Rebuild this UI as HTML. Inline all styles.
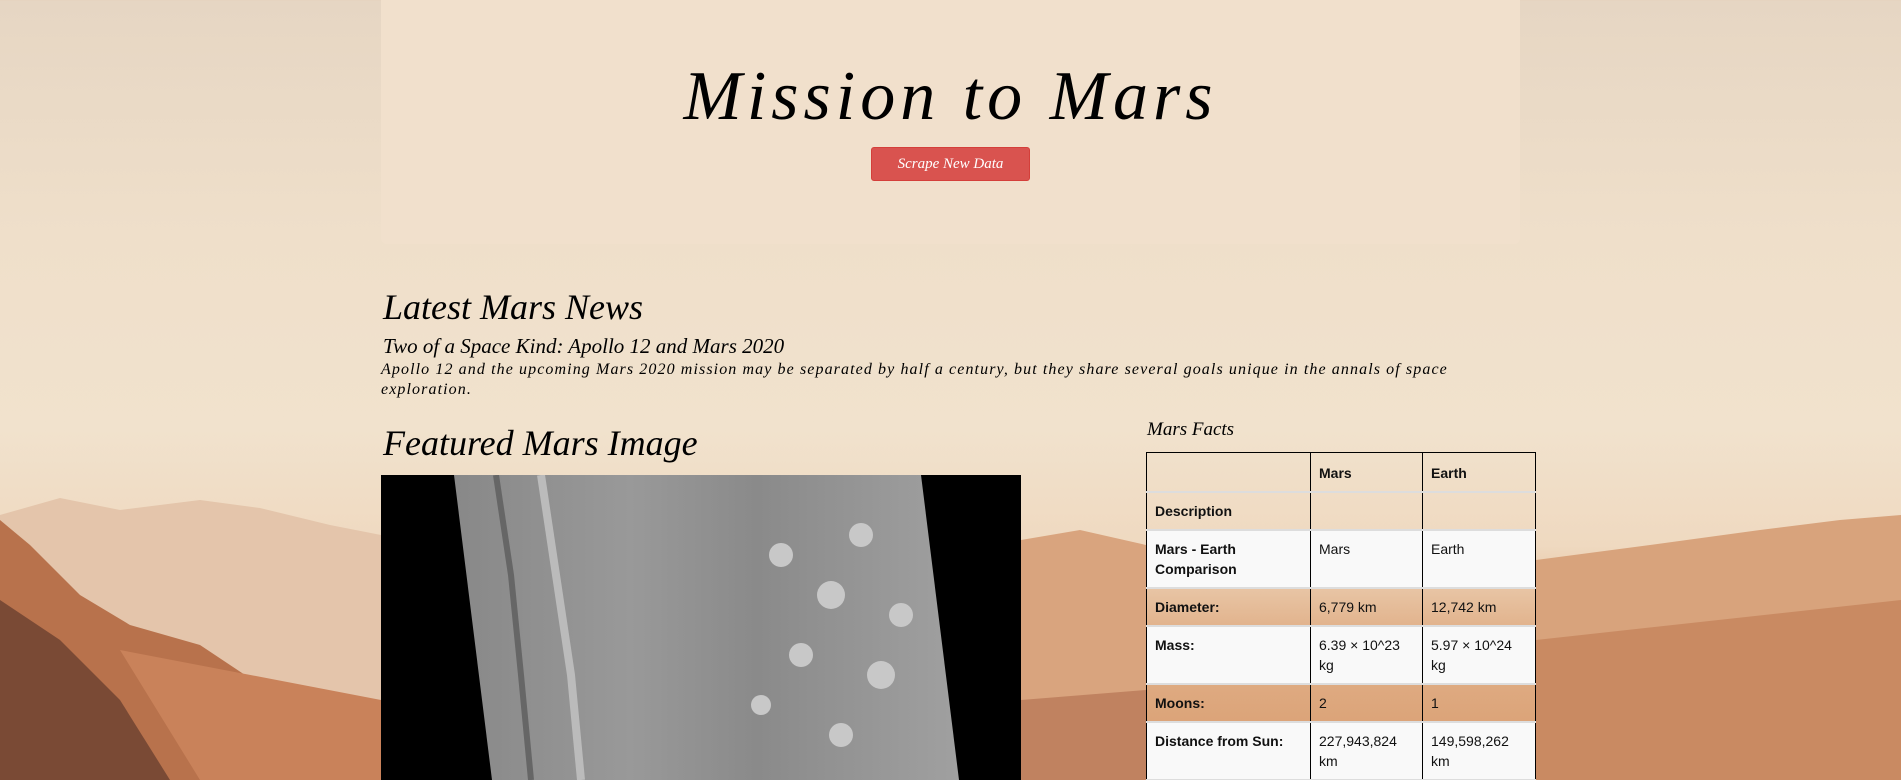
<!DOCTYPE html>
<html><head><meta charset="utf-8"><style>
*{margin:0;padding:0;box-sizing:border-box}
html,body{width:1901px;height:780px;overflow:hidden}
body{position:relative;font-family:"Liberation Sans",sans-serif;background:linear-gradient(180deg,#e6d6c3 0%,#efdfca 30%,#f1e2cd 55%,#efd9c0 70%,#e2b48e 80%,#d89a6c 100%)}
#bg{position:absolute;left:0;top:0}
.jumbo{position:absolute;left:381px;top:0;width:1139px;height:244px;background:#f1e0cc;border-radius:0 0 6px 6px}
.title{position:absolute;left:0;width:100%;top:57px;text-align:center;font-family:"Liberation Serif",serif;font-style:italic;font-size:70px;line-height:80px;letter-spacing:5px;color:#000}
.btn{position:absolute;left:490px;top:147px;width:159px;height:34px;background:#d9534f;border:1px solid #d43f3a;border-radius:3px;color:#fff;font-family:"Liberation Serif",serif;font-style:italic;font-size:15px;line-height:32px;text-align:center}
.cur{font-family:"Liberation Serif",serif;font-style:italic;color:#000;position:absolute}
table{position:absolute;left:1146px;top:452px;border-collapse:collapse;width:390px;font-size:14px;color:#111}
td,th{border-left:1px solid #000;border-right:1px solid #000;border-top:2px solid #ddd;padding:8px 8px;vertical-align:top;text-align:left;line-height:20px}
th{border-top:1px solid #000;border-bottom:2px solid #ddd;padding:10px 8px 8px}
tr.w td{background:#f9f9f9}
td:first-child{font-weight:bold}
</style></head><body>
<svg id="bg" width="1901" height="780">
<path d="M0 515 L60 498 L120 510 L200 500 L260 508 L330 525 L381 535 L381 780 L0 780Z" fill="#e4c5ab"/>
<path d="M1021 540 L1080 530 L1146 545 L1146 780 L1021 780Z" fill="#d9a47e"/>
<path d="M1536 560 L1650 545 L1760 530 L1840 520 L1901 515 L1901 780 L1536 780Z" fill="#d8a37c"/>
<path d="M1536 640 L1901 600 L1901 780 L1536 780Z" fill="#c98a62"/>
<path d="M0 520 L30 545 L80 595 L130 625 L200 645 L260 685 L381 720 L381 780 L0 780Z" fill="#b8724c"/>
<path d="M0 600 L60 640 L120 700 L170 780 L0 780Z" fill="#7a4a35"/>
<path d="M120 650 L381 700 L381 780 L200 780Z" fill="#c9825a"/>
<path d="M1021 700 L1146 690 L1146 780 L1021 780Z" fill="#c08260"/>
</svg>
<div class="jumbo"><div class="title">Mission to Mars</div><div class="btn">Scrape New Data</div></div>
<div class="cur" style="left:383px;top:287px;font-size:36px;line-height:40px">Latest Mars News</div>
<div class="cur" style="left:383px;top:333px;font-size:21px;line-height:26px">Two of a Space Kind: Apollo 12 and Mars 2020</div>
<div class="cur" style="left:381px;top:360px;width:1150px;font-size:16px;line-height:20px;letter-spacing:1.1px">Apollo 12 and the upcoming Mars 2020 mission may be separated by half a century, but they share several goals unique in the annals of space exploration.</div>
<div class="cur" style="left:383px;top:422px;font-size:36px;line-height:42px">Featured Mars Image</div>
<svg style="position:absolute;left:381px;top:475px" width="640" height="305">
<defs><linearGradient id="g" x1="0" x2="1"><stop offset="0" stop-color="#888"/><stop offset=".35" stop-color="#999"/><stop offset=".6" stop-color="#8a8a8a"/><stop offset="1" stop-color="#a0a0a0"/></linearGradient></defs>
<rect width="640" height="305" fill="#000"/>
<path d="M73 0 L540 0 L578 305 L111 305Z" fill="url(#g)"/>
<path d="M115 0 L130 100 L140 200 L150 305" stroke="#666" stroke-width="6" fill="none"/>
<path d="M160 0 L175 100 L190 200 L200 305" stroke="#bbb" stroke-width="8" fill="none"/>
<g fill="#c8c8c8"><circle cx="400" cy="80" r="12"/><circle cx="450" cy="120" r="14"/><circle cx="480" cy="60" r="12"/><circle cx="420" cy="180" r="12"/><circle cx="500" cy="200" r="14"/><circle cx="460" cy="260" r="12"/><circle cx="520" cy="140" r="12"/><circle cx="380" cy="230" r="10"/></g>
</svg>
<div class="cur" style="left:1147px;top:418px;font-size:19px;line-height:24px">Mars Facts</div>
<table>
<tr><th style="width:164px"></th><th style="width:112px">Mars</th><th>Earth</th></tr>
<tr><td>Description</td><td></td><td></td></tr>
<tr class="w"><td>Mars - Earth Comparison</td><td>Mars</td><td>Earth</td></tr>
<tr><td>Diameter:</td><td>6,779 km</td><td>12,742 km</td></tr>
<tr class="w"><td>Mass:</td><td>6.39 × 10^23 kg</td><td>5.97 × 10^24 kg</td></tr>
<tr><td>Moons:</td><td>2</td><td>1</td></tr>
<tr class="w"><td>Distance from Sun:</td><td>227,943,824 km</td><td>149,598,262 km</td></tr>
<tr><td>&nbsp;</td><td></td><td></td></tr>
</table>
</body></html>
